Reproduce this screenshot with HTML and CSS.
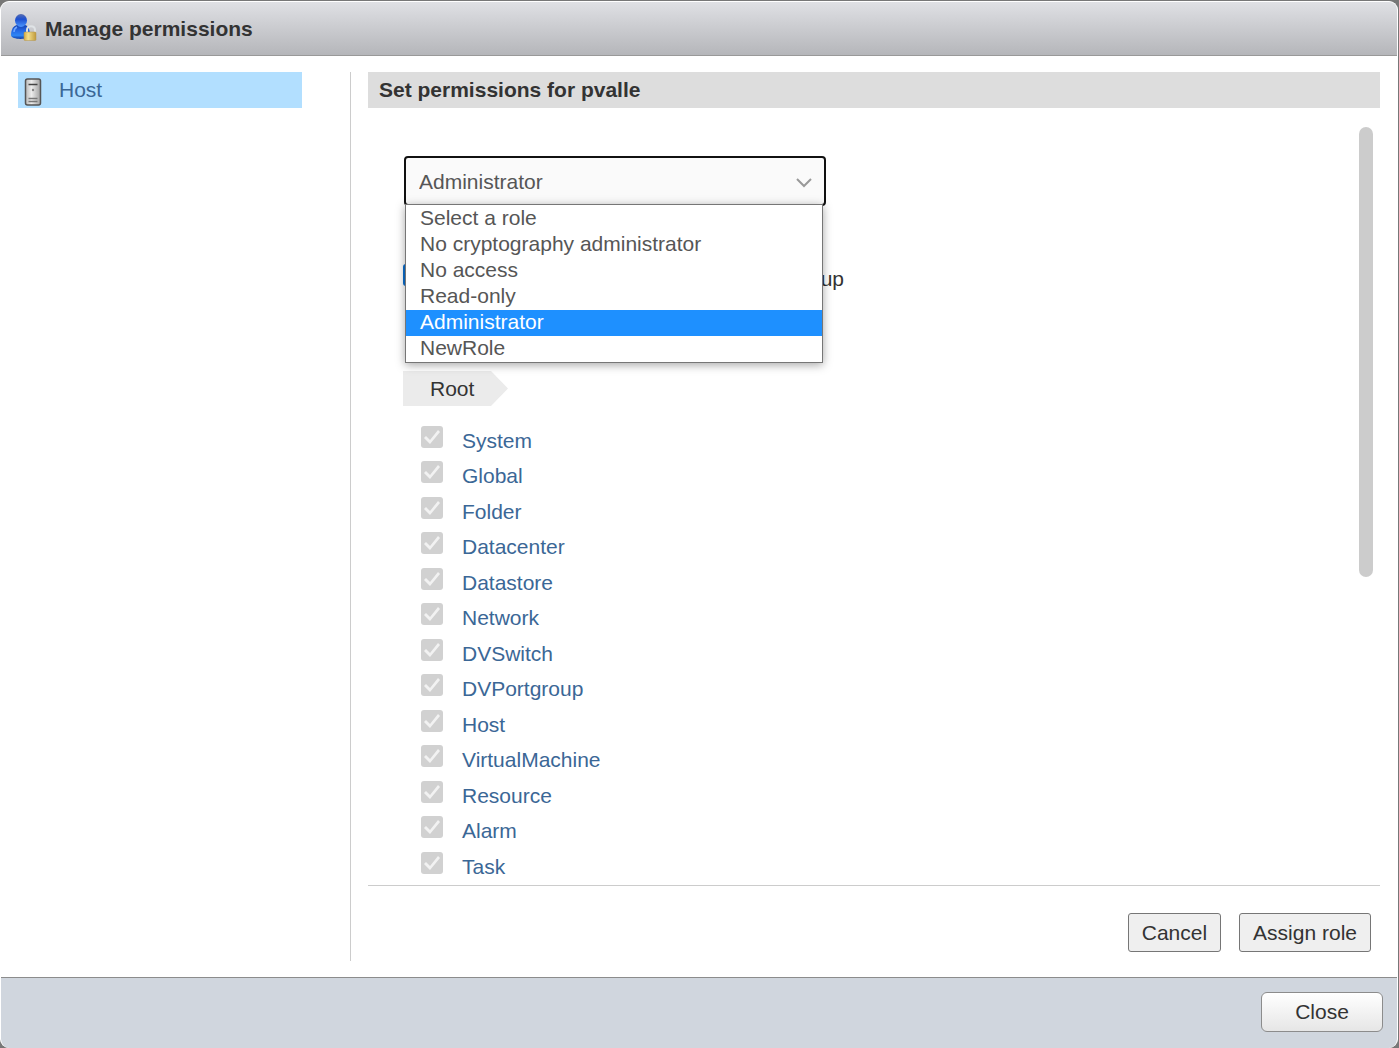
FILE: index.html
```html
<!DOCTYPE html>
<html lang="en">
<head>
  <meta charset="UTF-8">
  <title>Manage permissions</title>
  <link rel="stylesheet" href="styles.css">
</head>
<body>

  <div class="dialog">
    <header class="titlebar">
      <svg class="icon-user" viewBox="0 0 28 30" aria-hidden="true">
        <defs>
          <linearGradient id="blue" x1="0" y1="0" x2="0" y2="1">
            <stop offset="0" stop-color="#123fae"/>
            <stop offset="0.4" stop-color="#2468e6"/>
            <stop offset="0.75" stop-color="#2f86f5"/>
            <stop offset="1" stop-color="#0a3aa8"/>
          </linearGradient>
          <linearGradient id="head" x1="0" y1="0" x2="0" y2="1">
            <stop offset="0" stop-color="#5a6fb0"/>
            <stop offset="0.4" stop-color="#1c4fd0"/>
            <stop offset="1" stop-color="#4a96ff"/>
          </linearGradient>
          <linearGradient id="gold" x1="0" y1="0" x2="1" y2="0">
            <stop offset="0" stop-color="#d3aa45"/>
            <stop offset="0.35" stop-color="#f3df8c"/>
            <stop offset="1" stop-color="#c09a3c"/>
          </linearGradient>
        </defs>
        <path d="M1 21c0-5 2-9 6-10h8c4 1 5 6 5 11-2 4-19 4-19-1z" fill="url(#blue)"/>
        <path d="M4 18c0-3 1-4 3-5" fill="none" stroke="#6ea6ff" stroke-width="1.500"/>
        <ellipse cx="11" cy="6.500" rx="6" ry="6.500" fill="url(#head)"/>
        <path d="M17 18v-2c0-5 8-5 8 0v2" fill="none" stroke="#dfe3e6" stroke-width="2"/>
        <rect x="14" y="18" width="12" height="8.500" rx="1" fill="url(#gold)" stroke="#b3954f" stroke-width="0.500"/>
      </svg>
      <h1>Manage permissions</h1>
    </header>

    <div class="content">
      <nav class="sidebar">
        <a href="#" class="nav-item">
          <svg class="icon-host" viewBox="0 0 18 30" aria-hidden="true">
            <defs>
              <linearGradient id="metal" x1="0" y1="0" x2="1" y2="0">
                <stop offset="0" stop-color="#b8b8b8"/>
                <stop offset="0.4" stop-color="#ececec"/>
                <stop offset="1" stop-color="#a0a0a0"/>
              </linearGradient>
            </defs>
            <rect x="1.500" y="2" width="15" height="26" rx="2" fill="url(#metal)" stroke="#555" stroke-width="1.500"/>
            <path d="M4.500 7.500h9" stroke="#444" stroke-width="1.500"/>
            <path d="M4.500 21.500h9M4.500 24.500h9" stroke="#777" stroke-width="1.500"/>
            <circle cx="9" cy="13" r="1.200" fill="#888"/>
          </svg>
          Host
        </a>
      </nav>

      <main class="main">
        <h2>Set permissions for pvalle</h2>

        <div class="scroll">
          <div class="field">
            <select class="role" aria-label="Role">
              <option>Select a role</option>
              <option>No cryptography administrator</option>
              <option>No access</option>
              <option>Read-only</option>
              <option selected>Administrator</option>
              <option>NewRole</option>
            </select>
            <svg class="chevron" viewBox="0 0 16 10" aria-hidden="true">
              <path d="M1 1l7 7 7-7" fill="none" stroke="#999" stroke-width="2"/>
            </svg>
            <ul class="menu" role="listbox" aria-label="Role">
              <li role="option">Select a role</li>
              <li role="option">No cryptography administrator</li>
              <li role="option">No access</li>
              <li role="option">Read-only</li>
              <li role="option" class="active" aria-selected="true">Administrator</li>
              <li role="option">NewRole</li>
            </ul>
          </div>

          <label class="group-check">
            <input type="checkbox" class="check" checked>
            <span>Add as group</span>
          </label>

          <div class="crumb">Root</div>

          <ul class="privileges">
            <li><input type="checkbox" class="check" aria-label="System" checked disabled><a href="#">System</a></li>
            <li><input type="checkbox" class="check" aria-label="Global" checked disabled><a href="#">Global</a></li>
            <li><input type="checkbox" class="check" aria-label="Folder" checked disabled><a href="#">Folder</a></li>
            <li><input type="checkbox" class="check" aria-label="Datacenter" checked disabled><a href="#">Datacenter</a></li>
            <li><input type="checkbox" class="check" aria-label="Datastore" checked disabled><a href="#">Datastore</a></li>
            <li><input type="checkbox" class="check" aria-label="Network" checked disabled><a href="#">Network</a></li>
            <li><input type="checkbox" class="check" aria-label="DVSwitch" checked disabled><a href="#">DVSwitch</a></li>
            <li><input type="checkbox" class="check" aria-label="DVPortgroup" checked disabled><a href="#">DVPortgroup</a></li>
            <li><input type="checkbox" class="check" aria-label="Host" checked disabled><a href="#">Host</a></li>
            <li><input type="checkbox" class="check" aria-label="VirtualMachine" checked disabled><a href="#">VirtualMachine</a></li>
            <li><input type="checkbox" class="check" aria-label="Resource" checked disabled><a href="#">Resource</a></li>
            <li><input type="checkbox" class="check" aria-label="Alarm" checked disabled><a href="#">Alarm</a></li>
            <li><input type="checkbox" class="check" aria-label="Task" checked disabled><a href="#">Task</a></li>
          </ul>

          <div class="thumb"></div>
        </div>

        <div class="actions">
          <button type="button">Cancel</button>
          <button type="button">Assign role</button>
        </div>
      </main>
    </div>

    <footer class="footer">
      <button type="button" class="close">Close</button>
    </footer>
  </div>

</body>
</html>
```
FILE: styles.css
```css
* {
  box-sizing: border-box;
}

body {
  margin: 0;
  padding: 1px 1px 0 0;
  height: 100vh;
  background: #777;
  font-family: "Liberation Sans", Arial, sans-serif;
  font-size: 21px;
  line-height: 24px;
  color: #333;
}

h1, h2 {
  margin: 0;
  font-size: 21px;
  font-weight: bold;
}

ul {
  margin: 0;
  padding: 0;
  list-style: none;
}

a {
  color: #3b6796;
  text-decoration: none;
}

button, select {
  font: inherit;
  color: inherit;
}

.dialog {
  display: flex;
  flex-direction: column;
  height: 100%;
  background: white;
  border: 1px solid white;
  border-bottom: none;
  border-radius: 9px;
  overflow: hidden;
}

.titlebar {
  display: flex;
  align-items: center;
  gap: 7px;
  height: 54px;
  padding-left: 9px;
  background: linear-gradient(#dfe0e4, #b5b6ba);
  border-bottom: 1px solid #999;
}

.icon-user {
  width: 28px;
  height: 30px;
}

.content {
  display: flex;
  flex: 1;
  min-height: 0;
  padding: 16px 17px;
}

.sidebar {
  width: 333px;
  padding-right: 48px;
  border-right: 1px solid #ccc;
}

.nav-item {
  display: flex;
  align-items: center;
  gap: 17px;
  height: 36px;
  padding-left: 6px;
  background: #b2dfff;
}

.icon-host {
  width: 18px;
  height: 30px;
  margin-top: 3px;
}

.main {
  display: flex;
  flex-direction: column;
  flex: 1;
  min-width: 0;
  margin-left: 17px;
}

.main h2 {
  padding: 6px 11px;
  background: #ddd;
}

.scroll {
  position: relative;
  flex: 1;
  min-height: 0;
  padding: 48px 35px 0;
  overflow: hidden;
  border-bottom: 1px solid #ccc;
}

.field {
  position: relative;
  width: 422px;
  margin-left: 1px;
}

.role {
  display: block;
  width: 100%;
  height: 50px;
  padding: 2px 13px 0;
  appearance: none;
  background: #fafafa;
  border: 2px solid #111;
  border-radius: 4px;
  color: #565656;
}

.chevron {
  position: absolute;
  top: 22px;
  right: 14px;
  width: 16px;
  height: 10px;
}

.menu {
  position: absolute;
  z-index: 1;
  top: 48px;
  left: 1px;
  right: 3px;
  padding-top: 1px;
  background: white;
  border: 1px solid #767676;
  box-shadow: 0 2px 9px rgba(0, 0, 0, 0.35);
  color: #565656;
}

.menu li {
  height: 26px;
  padding-left: 14px;
}

.menu .active {
  background: #1e90ff;
  color: white;
}

.check {
  flex: none;
  width: 22px;
  height: 22px;
  margin: 0;
  appearance: none;
  background: #0b6fd0;
  border-radius: 3px;
}

.check:disabled {
  background: #d1d1d1;
}

.check::before {
  content: "";
  display: block;
  width: 22px;
  height: 22px;
  background: #f2f2f2;
  clip-path: polygon(3px 12px, 5px 10px, 9px 14px, 17px 4px, 19px 6px, 9px 18px);
}

.group-check {
  display: flex;
  justify-content: space-between;
  width: 441px;
  margin-top: 58px;
  line-height: 30px;
}

.crumb {
  width: 105px;
  margin-top: 77px;
  padding-left: 27px;
  background: #ebebeb;
  line-height: 35px;
  clip-path: polygon(0 0, 88px 0, 100% 50%, 88px 100%, 0 100%);
}

.privileges {
  margin-top: 20px;
  padding-left: 18px;
}

.privileges li {
  display: flex;
  gap: 19px;
  height: 35px;
  line-height: 30px;
}

.privileges li:nth-child(even) {
  height: 36px;
}

.thumb {
  position: absolute;
  top: 19px;
  right: 7px;
  width: 14px;
  height: 450px;
  background: #ccc;
  border-radius: 7px;
}

.actions {
  display: flex;
  justify-content: flex-end;
  gap: 18px;
  padding: 27px 9px 9px;
}

.actions button {
  height: 39px;
  padding: 0 13px;
  background: #efefef;
  border: 1px solid #767676;
  border-radius: 3px;
}

.footer {
  display: flex;
  justify-content: flex-end;
  height: 71px;
  padding: 14px;
  background: #d0d6de;
  border-top: 1px solid #8c8c8c;
  border-radius: 0 0 8px 8px;
}

.close {
  width: 122px;
  height: 40px;
  background: linear-gradient(white, #e6e6e6);
  border: 1px solid #8c8c8c;
  border-radius: 6px;
}
```
